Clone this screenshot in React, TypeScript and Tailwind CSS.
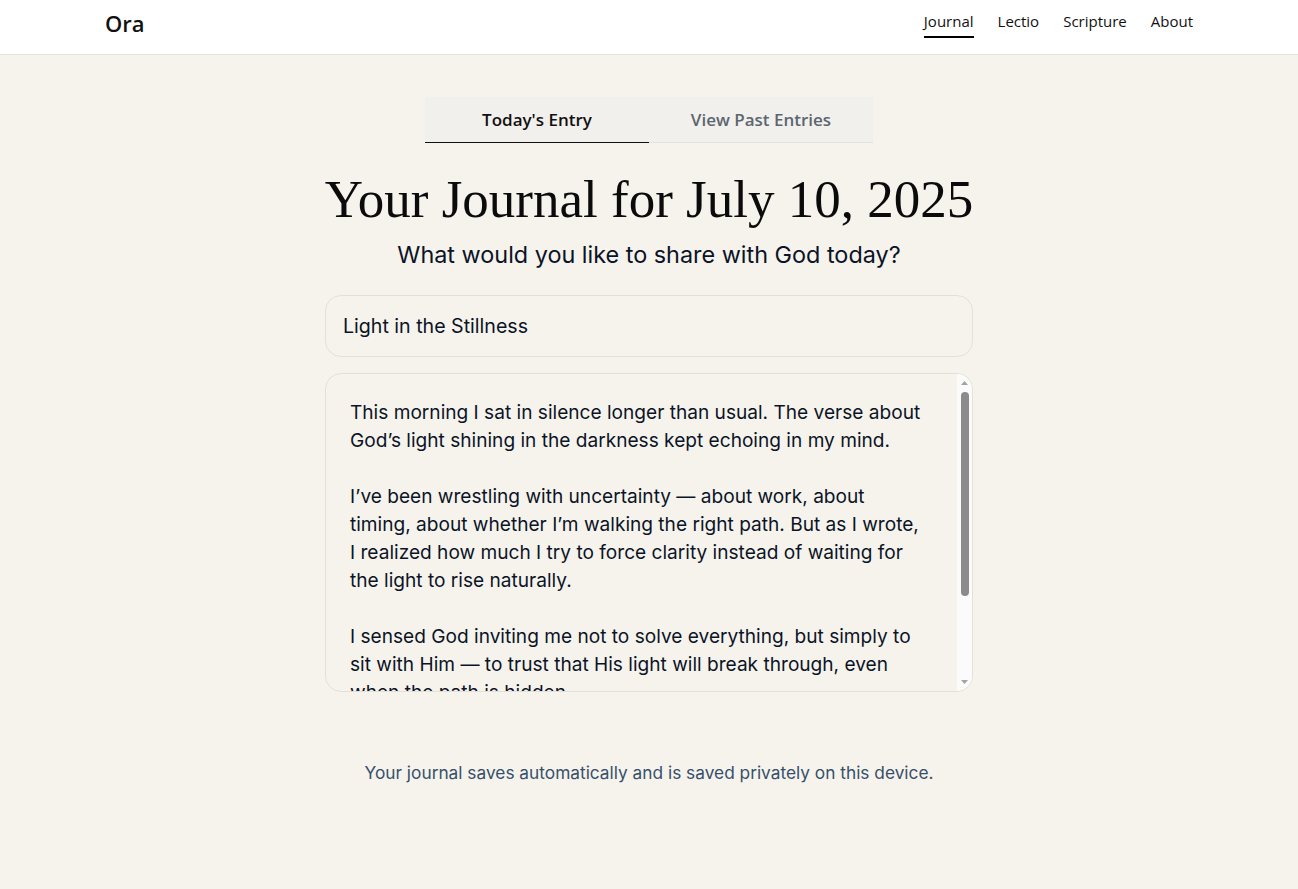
import { useState } from 'react'

const body = `This morning I sat in silence longer than usual. The verse about God’s light shining in the darkness kept echoing in my mind.

I’ve been wrestling with uncertainty — about work, about timing, about whether I’m walking the right path. But as I wrote, I realized how much I try to force clarity instead of waiting for the light to rise naturally.

I sensed God inviting me not to solve everything, but simply to sit with Him — to trust that His light will break through, even when the path is hidden.

Lord, teach me to wait in the stillness.`

const navItems = ['Journal', 'Lectio', 'Scripture', 'About']

function Scrollbar() {
	return (
		<div className="w-[15px] shrink-0 bg-[#fbfbfb] flex flex-col items-center py-[2px]">
			<svg width="9" height="14" viewBox="0 0 9 14" className="shrink-0">
				<path d="M1 9 L4.5 5 L8 9 Z" fill="#a3a3a3" />
			</svg>
			<div className="mt-[2px] h-[204px] w-[8px] rounded-full bg-[#8b8b8b]" />
			<div className="flex-1" />
			<svg width="9" height="14" viewBox="0 0 9 14" className="shrink-0">
				<path d="M1 5 L4.5 9 L8 5 Z" fill="#a3a3a3" />
			</svg>
		</div>
	)
}

export default function App() {
	const [tab, setTab] = useState<'today' | 'past'>('today')

	return (
		<div className="min-h-screen bg-[#f6f3ed] font-['Inter',sans-serif] text-[#0b1426]">
			<header className="bg-white border-b border-[#e6e3de]">
				<div className="max-w-6xl mx-auto px-8 h-[54px] pb-2 flex items-center justify-between">
					<span className="font-['Open_Sans',sans-serif] text-[22px] font-semibold text-[#111]">
						Ora
					</span>
					<nav className="flex items-center gap-6 font-['Open_Sans',sans-serif] text-[15px] text-[#111]">
						{navItems.map((item, i) => (
							<a
								key={item}
								href="#"
								className={
									i === 0
										? 'pt-[2px] pb-[3px] border-b-2 border-black'
										: 'pt-[2px] pb-[3px] border-b-2 border-transparent'
								}
							>
								{item}
							</a>
						))}
					</nav>
				</div>
			</header>

			<main className="flex flex-col items-center pt-[42px] pb-24">
				<div className="w-[448px] grid grid-cols-2 bg-[#f2f0ec] font-['Open_Sans',sans-serif] text-[17px] font-semibold">
					<button
						onClick={() => setTab('today')}
						className={
							tab === 'today'
								? 'h-[46px] border-b border-[#111] text-[#111]'
								: 'h-[46px] border-b border-[#e3e1dd] text-[#5b6670]'
						}
					>
						Today's Entry
					</button>
					<button
						onClick={() => setTab('past')}
						className={
							tab === 'past'
								? 'h-[46px] border-b border-[#111] text-[#111]'
								: 'h-[46px] border-b border-[#e3e1dd] text-[#5b6670]'
						}
					>
						View Past Entries
					</button>
				</div>

				<h1 className="mt-[26px] font-['Liberation_Serif',serif] text-[53px] leading-[60px] text-[#0b0b0b]">
					Your Journal for July 10, 2025
				</h1>
				<p className="mt-[11px] text-[23.4px] leading-[30px] text-[#0b1426]">
					What would you like to share with God today?
				</p>

				<div className="w-[648px] mt-[25px] flex flex-col gap-4">
					<input
						defaultValue="Light in the Stillness"
						className="h-[62px] w-full rounded-2xl border border-[#e4e0d9] bg-[#f6f3ed] px-[17px] text-[19.6px] text-[#0b1426] outline-none"
					/>
					<div className="h-[319px] flex rounded-2xl border border-[#e4e0d9] bg-[#f6f3ed] overflow-hidden">
						<textarea
							defaultValue={body}
							className="flex-1 h-full resize-none overflow-hidden bg-transparent pl-6 pr-[28px] pt-6 pb-6 text-[19.1px] leading-[28px] text-[#0b1426] outline-none"
						/>
						<Scrollbar />
					</div>
				</div>

				<p className="mt-[68px] text-[17.3px] text-[#36506a]">
					Your journal saves automatically and is saved privately on this device.
				</p>
			</main>
		</div>
	)
}
